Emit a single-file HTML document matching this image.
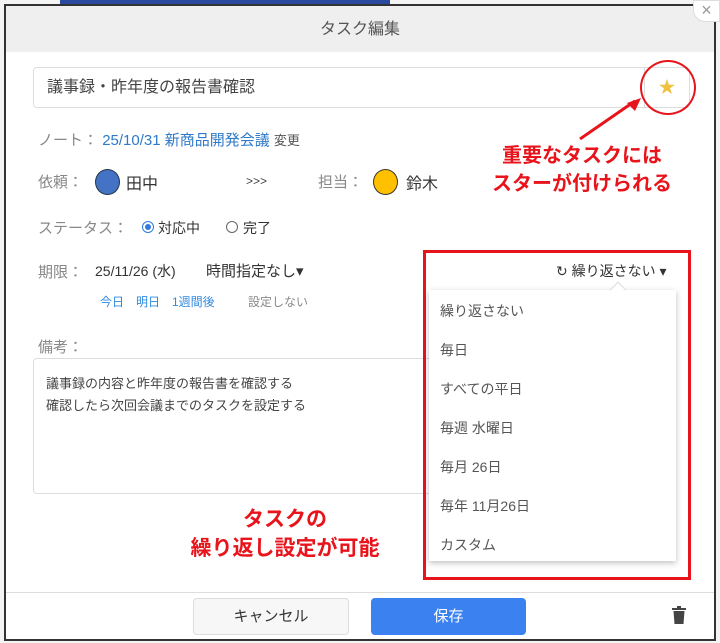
<!DOCTYPE html>
<html><head><meta charset="utf-8"><style>
*{box-sizing:border-box;margin:0;padding:0}
body{width:720px;height:643px;background:#f4f4f4;position:relative;overflow:hidden;font-family:"Liberation Sans","Noto Sans CJK JP",sans-serif;color:#333;font-size:14px}
.a{position:absolute;white-space:nowrap}
#m{position:absolute;left:4px;top:4px;width:712px;height:637px;background:#fff;border:2px solid #333}
.hd{position:absolute;left:0;top:0;width:100%;height:46px;background:#efefef;text-align:center;line-height:48px;font-size:16px;color:#555}
.g{color:#888}
.red{color:#e8141c;font-weight:bold;font-size:20px;text-align:center;line-height:28px}
.dd div{height:39px;line-height:39px;padding-left:11px;color:#555;font-size:14px}
</style></head><body>
<div class="a" style="left:60px;top:0;width:330px;height:5px;background:#2a4aa0"></div>
<div id="m">
<div class="hd">タスク編集</div>
</div>
<div class="a" style="left:693px;top:0;width:27px;height:22px;background:#fff;border-radius:0 0 0 12px;border:1px solid #ddd;color:#999;font-size:18px;text-align:center;line-height:18px">×</div>
<div class="a" style="left:33px;top:67px;width:612px;height:41px;border:1px solid #ddd;border-radius:4px 0 0 4px;padding-left:13px;line-height:39px;font-size:16px;color:#444">議事録・昨年度の報告書確認</div>
<div class="a" style="left:644px;top:67px;width:46px;height:41px;border:1px solid #ddd;border-radius:0 4px 4px 0;text-align:center;line-height:39px;color:#f0c040;font-size:17px">★</div>
<div class="a" style="left:640px;top:60px;width:56px;height:55px;border:2px solid #e8141c;border-radius:50%"></div>
<svg class="a" style="left:575px;top:95px" width="70" height="45"><line x1="5" y1="44" x2="60" y2="6" stroke="#e8141c" stroke-width="3"/><polygon points="66,3 52,8 60,16" fill="#e8141c"/></svg>
<div class="a red" style="left:482px;top:142px;width:200px">重要なタスクには<br>スターが付けられる</div>
<div class="a" style="left:38px;top:129px;font-size:15px"><span class="g">ノート：</span> <span style="color:#2f7ac8">25/10/31 新商品開発会議</span> <span style="color:#555;font-size:13px">変更</span></div>
<div class="a g" style="left:38px;top:171px;font-size:15px">依頼：</div>
<div class="a" style="left:95px;top:169px;width:25px;height:26px;border-radius:50%;background:#4472c4;border:1px solid #234"></div>
<div class="a" style="left:126px;top:170px;font-size:16px">田中</div>
<div class="a" style="left:246px;top:174px;font-size:12px;color:#444">&gt;&gt;&gt;</div>
<div class="a g" style="left:318px;top:171px;font-size:15px">担当：</div>
<div class="a" style="left:373px;top:169px;width:25px;height:26px;border-radius:50%;background:#ffc000;border:1px solid #333"></div>
<div class="a" style="left:406px;top:170px;font-size:16px">鈴木</div>
<div class="a" style="left:38px;top:217px;font-size:15px"><span class="g">ステータス：</span></div>
<div class="a" style="left:142px;top:221px;width:12px;height:12px;border:1px solid #2f7ae0;border-radius:50%"><div style="margin:2px;width:6px;height:6px;border-radius:50%;background:#2f7ae0"></div></div>
<div class="a" style="left:158px;top:218px;font-size:14px">対応中</div>
<div class="a" style="left:226px;top:221px;width:12px;height:12px;border:1px solid #666;border-radius:50%"></div>
<div class="a" style="left:243px;top:218px;font-size:14px">完了</div>
<div class="a" style="left:38px;top:261px;font-size:15px"><span class="g">期限：</span></div>
<div class="a" style="left:95px;top:261px;font-size:14px">25/11/26 (水)</div>
<div class="a" style="left:206px;top:260px;font-size:15px">時間指定なし▾</div>
<div class="a" style="left:100px;top:293px;font-size:12px;color:#2f8ae0">今日　明日　1週間後</div>
<div class="a" style="left:248px;top:293px;font-size:12px;color:#888">設定しない</div>
<div class="a" style="left:556px;top:261px;font-size:14px">↻ 繰り返さない ▾</div>
<div class="a g" style="left:38px;top:336px;font-size:15px">備考：</div>
<div class="a" style="left:33px;top:358px;width:420px;height:136px;border:1px solid #ddd;border-radius:4px;padding:14px 12px;font-size:13px;line-height:22px;color:#444">議事録の内容と昨年度の報告書を確認する<br>確認したら次回会議までのタスクを設定する</div>
<div class="a" style="left:423px;top:250px;width:268px;height:330px;border:3px solid #e8141c"></div>
<div class="a dd" style="left:429px;top:290px;width:247px;height:271px;background:#fff;box-shadow:0 2px 6px rgba(0,0,0,.25);padding-top:2px">
<div>繰り返さない</div><div>毎日</div><div>すべての平日</div><div>毎週 水曜日</div><div>毎月 26日</div><div>毎年 11月26日</div><div>カスタム</div></div>
<div class="a" style="left:612px;top:284px;width:12px;height:12px;background:#fff;transform:rotate(45deg);border-left:1px solid #ddd;border-top:1px solid #ddd"></div>
<div class="a red" style="left:160px;top:505px;width:250px;font-size:21px;line-height:29px">タスクの<br>繰り返し設定が可能</div>
<div class="a" style="left:6px;top:592px;width:708px;height:1px;background:#ddd"></div>
<div class="a" style="left:193px;top:598px;width:156px;height:37px;border:1px solid #ddd;border-radius:4px;background:#f7f7f7;text-align:center;line-height:35px;font-size:15px">キャンセル</div>
<div class="a" style="left:371px;top:598px;width:155px;height:37px;border-radius:4px;background:#3b82f0;text-align:center;line-height:37px;font-size:15px;color:#fff">保存</div>
<svg class="a" style="left:672px;top:606px" width="14" height="18"><rect x="0" y="2" width="14" height="2" fill="#444"/><rect x="5" y="0" width="4" height="2" fill="#444"/><path d="M1.5 5h11l-1 13h-9z" fill="#444"/></svg>
</body></html>
